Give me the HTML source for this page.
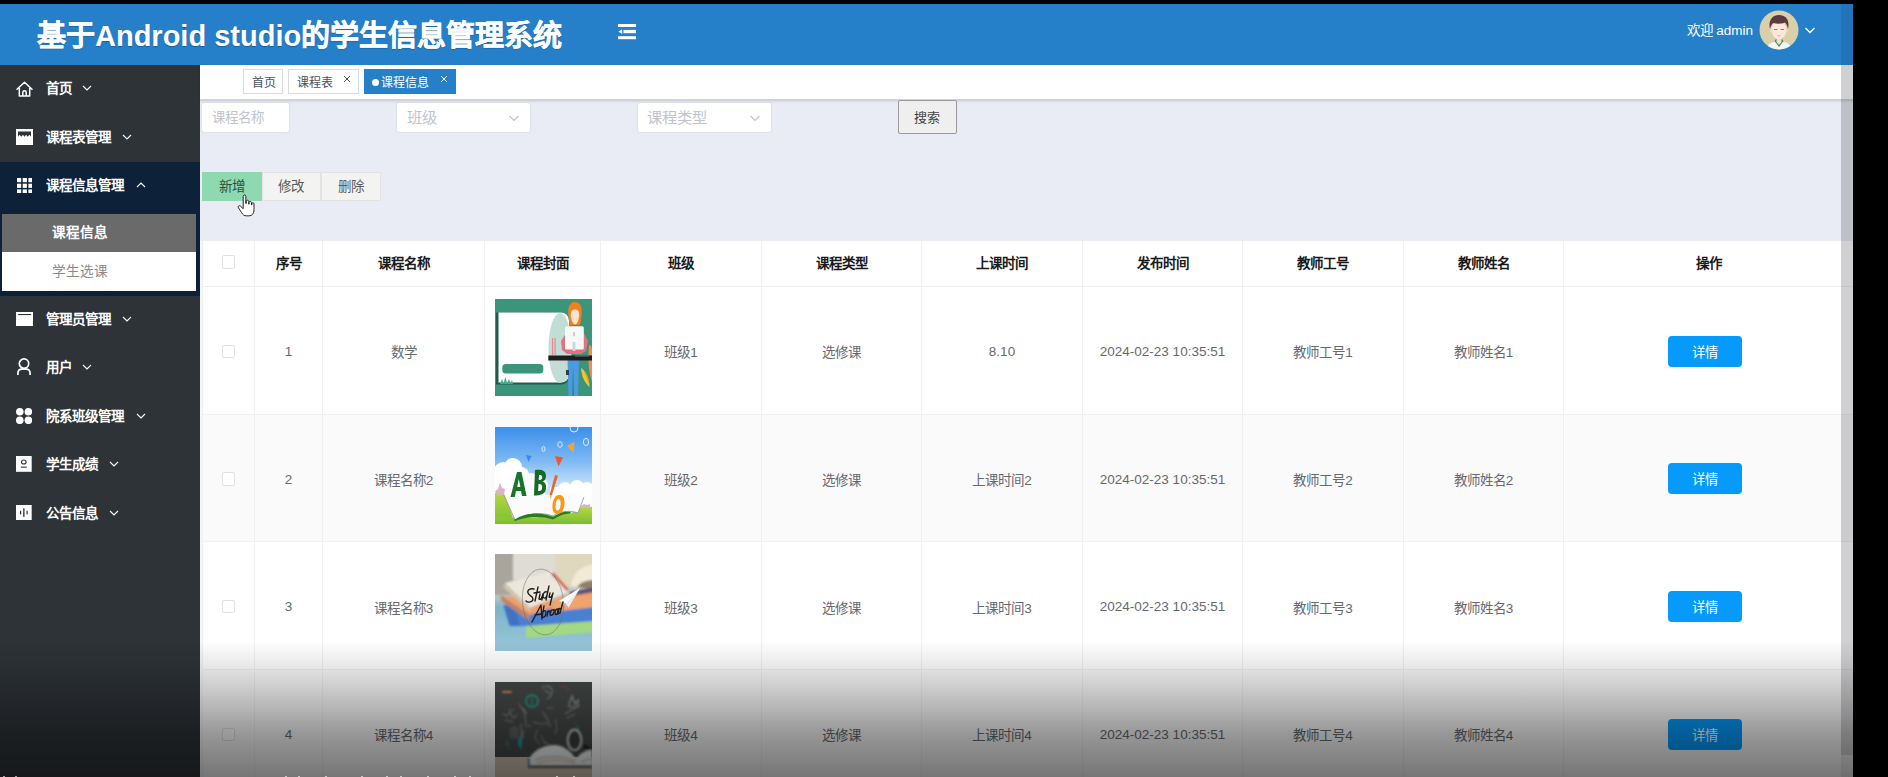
<!DOCTYPE html>
<html lang="zh-CN">
<head>
<meta charset="utf-8">
<title>基于Android studio的学生信息管理系统</title>
<style>
*{box-sizing:border-box;margin:0;padding:0}
html,body{width:1888px;height:777px;overflow:hidden;background:#000}
body{font-family:"Liberation Sans",sans-serif;font-size:14px;color:#606266;position:relative}
.abs{position:absolute}
#app{position:absolute;left:0;top:4px;width:1853px;height:773px;background:#e9ecf4;overflow:hidden}
/* header */
#hdr{position:absolute;left:0;top:0;width:1853px;height:61px;background:#2680c9}
#title{position:absolute;left:37px;top:12.300px;font-size:29px;font-weight:bold;color:#fff;white-space:nowrap;letter-spacing:0px;line-height:40px;text-shadow:0 1px 1px rgba(0,30,80,.35)}
#fold{position:absolute;left:618px;top:19.500px;width:18px;height:16px}
#welcome{position:absolute;left:1686.500px;top:17.500px;font-size:13.500px;color:#fff;line-height:18px;white-space:nowrap}
#avatar{position:absolute;left:1758.600px;top:6.100px;width:40px;height:40px}
#hchev{position:absolute;left:1803.500px;top:20.500px;width:12px;height:10px}
/* sidebar */
#side{position:absolute;left:0;top:61px;width:200px;height:712px;background:#2e3338}
.mi{position:absolute;left:0;width:200px;height:48.500px;color:#fff;font-size:13.500px;font-weight:bold;line-height:48.500px;white-space:nowrap}
.mi .ic{position:absolute}
.mi .tx{position:absolute;left:46px;top:0}
.mi svg.cv{position:absolute;top:19px;width:10px;height:8px}
#openbg{position:absolute;left:0;top:97px;width:200px;height:133.500px;background:#0d2139}
.sub{position:absolute;left:2px;width:194.200px;height:39px;line-height:39px;font-size:13.600px;padding-left:50.400px}
/* main */
#tabs{position:absolute;left:200px;top:60.500px;width:1653px;height:36.500px;background:#fff;border-bottom:2px solid #cfd2d9;box-shadow:0 1px 2px rgba(0,0,0,.08)}
.tab{position:absolute;top:4.500px;height:25px;border:1px solid #d8dce5;background:#fff;color:#495060;font-size:12px;line-height:26px;padding:0 8px;white-space:nowrap}
.tab.on{background:#2680c9;border-color:#2680c9;color:#fff}
.tab .x{position:absolute;top:4.500px;width:8px;height:8px}
.tab .dot{position:absolute;left:7.500px;top:9px;width:7px;height:7px;border-radius:50%;background:#fff}
.inp{position:absolute;top:98.600px;height:29.400px;background:#fff;border-radius:2px;box-shadow:0 0 2px rgba(120,130,160,.35);color:#c0c4cc;line-height:30.500px;white-space:nowrap}
.btn{position:absolute;top:167.700px;height:29.600px;line-height:27px;text-align:center;font-size:13.500px;color:#5a5a5a;background:#f3f3f2;border:1px solid #e3e3e3}
/* table */
#tbl{position:absolute;left:202px;top:237px;width:1651px;height:540px;background:#fff;border-left:1px solid #eff0f3;font-size:13.500px;color:#66696e}
.row{position:absolute;left:0;width:1651px;border-bottom:1px solid #eff0f3}
.row.alt{background:#fafafa}
.c{position:absolute;top:0;height:100%;padding-top:2px;border-right:1px solid #eff0f3;display:flex;align-items:center;justify-content:center;white-space:nowrap}
.hd .c{color:#1a1a1a;font-weight:bold;padding-top:0;padding-bottom:2.500px;font-size:13.500px}
.hd .cb{position:relative;top:-.5px}
.cb{width:13.500px;height:13.500px;border:1px solid #dfe1e6;border-radius:2px;background:#fff}
.det{position:relative;top:-.3px;width:73.600px;height:31px;overflow:hidden;border-radius:4px;background:#059afb;color:#fff;font-size:13.300px;line-height:33px;text-align:center;margin-right:7px}
.img{position:absolute;left:10px;top:11.900px;width:97px;height:97px;display:block}
#sbar{position:absolute;left:1840.500px;top:61px;width:12.500px;height:690px;background:rgba(40,40,50,.22)}
#sbar2{position:absolute;left:1840.500px;top:0;width:12.500px;height:61px;background:rgba(20,40,80,.14)}
#sbar3{position:absolute;left:1840.500px;top:751px;width:12.500px;height:22px;background:rgba(40,40,50,.08)}
#shade{position:absolute;left:0;top:640px;width:1853px;height:137px;background:linear-gradient(to bottom,rgba(0,0,0,0) 0,rgba(0,0,0,.10) 21%,rgba(0,0,0,.24) 44%,rgba(0,0,0,.40) 69%,rgba(0,0,0,.53) 100%);pointer-events:none}
#specks{position:absolute;left:0;top:775.500px;width:1853px;height:2px}
.sp{position:absolute;top:0;width:1.500px;height:2px;background:rgba(255,255,255,.6)}
.cj{-webkit-text-stroke:.45px #fff;display:inline-block;text-align:justify;text-align-last:justify;white-space:nowrap;vertical-align:top}
</style>
</head>
<body>
<div id="app">
  <div id="hdr">
    <div id="title"><span class="cj" style="width:2em">基于</span>Android studio<span class="cj" style="width:9em">的学生信息管理系统</span></div>
    <svg id="fold" viewBox="0 0 18 16"><g fill="#fff"><rect x="0" y="0" width="18" height="3"/><rect x="5.500" y="5.900" width="12.500" height="3.300"/><rect x="0" y="12.200" width="18" height="3"/><path d="M0.300 7.600L4.200 5.200v4.800z"/></g></svg>
    <div id="welcome">欢迎 admin</div>
    <svg id="avatar" viewBox="0 0 40 40"><defs><clipPath id="avc"><circle cx="20" cy="20" r="19.500"/></clipPath></defs><circle cx="20" cy="20" r="19.500" fill="#d9d0ab"/><g clip-path="url(#avc)"><path d="M7 40c1-6 6-8.500 13-8.500s12 2.500 13 8.500z" fill="#f4f6f6"/><path d="M15.500 31l4.500 6 4.500-6-1.500-2h-6z" fill="#3f8f5a"/><path d="M17.500 27h5v5l-2.500 3-2.500-3z" fill="#f6dccd"/><ellipse cx="20" cy="20" rx="7.300" ry="9.300" fill="#fbe8dc"/><ellipse cx="12.600" cy="20.500" rx="1.300" ry="2" fill="#f6dccd"/><ellipse cx="27.400" cy="20.500" rx="1.300" ry="2" fill="#f6dccd"/><path d="M11 19c-2-8 2-14 9-14s11 5 9 14c-0.500-3-1.500-5-3-6.500-3 1.500-8 1.500-12 0.500-1.500 1.500-2.500 3.500-3 6z" fill="#5a3b40"/><path d="M15 19.500h3.500M21.500 19.500h3.500" stroke="#6b4a44" stroke-width="0.700"/><path d="M18.500 25.500c1 0.700 2 0.700 3 0" stroke="#e08a80" stroke-width="0.800" fill="none"/></g></svg>
    <svg id="hchev" viewBox="0 0 12 10"><path d="M1.5 3l4.5 4.5L10.5 3" fill="none" stroke="#fff" stroke-width="1.3"/></svg>
  </div>
  <div id="side">
    <div id="openbg"></div>
    <div class="mi" style="top:0px"><svg class="ic" style="left:16px;top:15.5px;width:17px;height:16px" viewBox="0 0 17 16"><path d="M1 8.200L8.500 1.200 16 8.200M3.300 7v8h10.400V7M6.800 15v-3.600a1.700 1.700 0 0 1 3.400 0V15" fill="none" stroke="#fff" stroke-width="1.500" stroke-linejoin="round" stroke-linecap="round"/></svg><span class="tx">首页</span><svg class="cv" style="left:81.7px" viewBox="0 0 10 8"><path d="M1 2l4 4 4-4" fill="none" stroke="#fff" stroke-width="1.100"/></svg></div>
    <div class="mi" style="top:48.5px"><svg class="ic" style="left:16px;top:15px;width:17px;height:16.5px" viewBox="0 0 17 16.5"><rect x="0" y="0" width="17" height="16.500" fill="#fff"/><path d="M2 2.500H15V7.800L13.400 5.800 11.700 7.800 10.100 5.800 8.500 7.800 6.900 5.800 5.300 7.800 3.600 5.800 2 7.800Z" fill="#2e3338"/></svg><span class="tx">课程表管理</span><svg class="cv" style="left:122.4px" viewBox="0 0 10 8"><path d="M1 2l4 4 4-4" fill="none" stroke="#fff" stroke-width="1.100"/></svg></div>
    <div class="mi" style="top:97px"><svg class="ic" style="left:16.5px;top:15.5px;width:15.6px;height:15.6px" viewBox="0 0 15.6 15.6"><rect x="0" y="0" width="4.200" height="4.200" fill="#fff"/><rect x="5.7" y="0" width="4.200" height="4.200" fill="#fff"/><rect x="11.4" y="0" width="4.200" height="4.200" fill="#fff"/><rect x="0" y="5.7" width="4.200" height="4.200" fill="#fff"/><rect x="5.7" y="5.7" width="4.200" height="4.200" fill="#fff"/><rect x="11.4" y="5.7" width="4.200" height="4.200" fill="#fff"/><rect x="0" y="11.4" width="4.200" height="4.200" fill="#fff"/><rect x="5.7" y="11.4" width="4.200" height="4.200" fill="#fff"/><rect x="11.4" y="11.4" width="4.200" height="4.200" fill="#fff"/></svg><span class="tx">课程信息管理</span><svg class="cv" style="left:135.6px" viewBox="0 0 10 8"><path d="M1 6l4-4 4 4" fill="none" stroke="#fff" stroke-width="1.100"/></svg></div>
    <div class="mi" style="top:230.5px"><svg class="ic" style="left:15.6px;top:16px;width:17.5px;height:14.5px" viewBox="0 0 17.5 14.5"><rect x="0" y="0" width="17.500" height="14.500" fill="#fff"/><rect x="2.200" y="2" width="13" height="1.100" fill="#2e3338"/></svg><span class="tx">管理员管理</span><svg class="cv" style="left:122.4px" viewBox="0 0 10 8"><path d="M1 2l4 4 4-4" fill="none" stroke="#fff" stroke-width="1.100"/></svg></div>
    <div class="mi" style="top:279px"><svg class="ic" style="left:17.3px;top:14.3px;width:14px;height:17px" viewBox="0 0 14 17"><circle cx="7" cy="5.600" r="4.700" fill="none" stroke="#fff" stroke-width="1.700"/><path d="M0.900 17v-1.500c0-2.800 2-4.300 4.100-4.300h4c2.100 0 4.100 1.500 4.100 4.300V17" fill="none" stroke="#fff" stroke-width="1.700"/></svg><span class="tx">用户</span><svg class="cv" style="left:82px" viewBox="0 0 10 8"><path d="M1 2l4 4 4-4" fill="none" stroke="#fff" stroke-width="1.100"/></svg></div>
    <div class="mi" style="top:327.5px"><svg class="ic" style="left:16px;top:15px;width:16.2px;height:16.1px" viewBox="0 0 16.2 16.1"><g fill="#fff"><circle cx="3.800" cy="3.800" r="3.800"/><circle cx="12.400" cy="3.800" r="3.800"/><circle cx="3.800" cy="12.300" r="3.800"/><circle cx="12.400" cy="12.300" r="3.800"/></g></svg><span class="tx">院系班级管理</span><svg class="cv" style="left:135.6px" viewBox="0 0 10 8"><path d="M1 2l4 4 4-4" fill="none" stroke="#fff" stroke-width="1.100"/></svg></div>
    <div class="mi" style="top:376px"><svg class="ic" style="left:16.3px;top:15px;width:15.7px;height:15.8px" viewBox="0 0 15.7 15.8"><rect x="0" y="0" width="15.700" height="15.800" fill="#fff"/><ellipse cx="7.800" cy="6" rx="2.300" ry="2" fill="none" stroke="#2e3338" stroke-width="1.100"/><rect x="4.800" y="10.600" width="6" height="1.100" fill="#2e3338"/></svg><span class="tx">学生成绩</span><svg class="cv" style="left:109.3px" viewBox="0 0 10 8"><path d="M1 2l4 4 4-4" fill="none" stroke="#fff" stroke-width="1.100"/></svg></div>
    <div class="mi" style="top:424.5px"><svg class="ic" style="left:16.3px;top:15.5px;width:15.7px;height:15.2px" viewBox="0 0 15.7 15.2"><rect x="0" y="0" width="15.700" height="15.200" fill="#fff"/><g fill="#2e3338"><rect x="4" y="5.800" width="1.200" height="3.600"/><rect x="7.200" y="3.300" width="1.300" height="8.600"/><rect x="10.500" y="5.800" width="1.200" height="3.600"/></g></svg><span class="tx">公告信息</span><svg class="cv" style="left:109.3px" viewBox="0 0 10 8"><path d="M1 2l4 4 4-4" fill="none" stroke="#fff" stroke-width="1.100"/></svg></div>
    <div class="sub" style="top:148.800px;height:38.300px;line-height:38.500px;background:#6a6a6a;color:#fff;font-weight:bold">课程信息</div>
    <div class="sub" style="top:187.100px;height:38.800px;line-height:39px;background:#fff;color:#8a8a8a">学生选课</div>
  </div>
  <div id="tabs">
    <div class="tab" style="left:43px;width:40px">首页</div>
    <div class="tab" style="left:88px;width:70.500px">课程表<svg class="x" style="left:53.5px" viewBox="0 0 8 8"><path d="M1 1l6 6M7 1l-6 6" stroke="#495060" stroke-width="1" fill="none"/></svg></div>
    <div class="tab on" style="left:163.700px;width:92.700px;padding-left:16px"><i class="dot"></i>课程信息<svg class="x" style="left:75.5px" viewBox="0 0 8 8"><path d="M1 1l6 6M7 1l-6 6" stroke="#fff" stroke-width="1" fill="none"/></svg></div>
  </div>
  <div class="inp" style="left:201.500px;width:87.700px;padding-left:10px;font-size:13.500px">课程名称</div>
  <div class="inp" style="left:397.300px;width:133px;padding-left:9.500px;font-size:15.300px">班级<svg style="position:absolute;right:10px;top:10px;width:12px;height:10px" viewBox="0 0 12 10"><path d="M1.500 3l4.500 4.500L10.500 3" fill="none" stroke="#c0c4cc" stroke-width="1.200"/></svg></div>
  <div class="inp" style="left:637.500px;width:133.500px;padding-left:9.500px;font-size:15.300px">课程类型<svg style="position:absolute;right:10px;top:10px;width:12px;height:10px" viewBox="0 0 12 10"><path d="M1.500 3l4.500 4.500L10.500 3" fill="none" stroke="#c0c4cc" stroke-width="1.200"/></svg></div>
  <div class="abs" style="left:897.500px;top:95.700px;width:59.700px;height:34.600px;background:#efefef;border:1px solid #9a9a9a;border-radius:2px;color:#444;font-size:13px;line-height:33px;text-align:center">搜索</div>
  <div class="btn" style="left:201.500px;width:60px;background:#8ed9b0;border-color:#8ed9b0;color:#2b4f3e">新增</div>
  <div class="btn" style="left:261.700px;width:59px">修改</div>
  <div class="btn" style="left:321.300px;width:59.300px">删除</div>
  <svg class="abs" style="left:237.300px;top:189.500px;width:19px;height:24.700px" viewBox="0 0 20 26"><path d="M6.500 2.500c0-2 2.800-2 2.800 0v7.500l0.400 0.100v-2.300c0-1.700 2.600-1.700 2.600 0v2.800l0.400 0.100v-1.700c0-1.600 2.500-1.600 2.500 0v2.400l0.400 0.100v-1.200c0-1.500 2.300-1.500 2.300 0v6.200c0 4-2 6.500-5.500 6.500h-2.400c-2.500 0-3.800-1.200-5.200-3.400l-3.300-5.200c-0.900-1.500 0.800-2.800 2.100-1.600l2.900 2.700z" fill="#fff" stroke="#222" stroke-width="1.050" stroke-linejoin="round"/></svg>
  <div class="abs" style="left:200px;top:237px;width:3px;height:540px;background:#f5f6f9"></div>
  <div id="tbl">
    <div class="row hd" style="top:0;height:46.200px"><div class="c" style="left:0px;width:52px"><div class="cb"></div></div><div class="c" style="left:52px;width:68px">序号</div><div class="c" style="left:120px;width:162px">课程名称</div><div class="c" style="left:282px;width:116px">课程封面</div><div class="c" style="left:398px;width:161px">班级</div><div class="c" style="left:559px;width:160px">课程类型</div><div class="c" style="left:719px;width:161px">上课时间</div><div class="c" style="left:880px;width:160px">发布时间</div><div class="c" style="left:1040px;width:161px">教师工号</div><div class="c" style="left:1201px;width:160px">教师姓名</div><div class="c" style="left:1361px;width:289px;border-right:0">操作</div></div>
    <div class="row" style="top:46.200px;height:127.600px"><div class="c" style="left:0px;width:52px"><div class="cb"></div></div><div class="c" style="left:52px;width:68px">1</div><div class="c" style="left:120px;width:162px">数学</div><div class="c" style="left:282px;width:116px"><svg class="img" viewBox="0 0 97 97"><rect width="97" height="97" fill="#3a957a"/>
<path d="M1 13.500h65a8 8 0 0 1 8 8v56a8 8 0 0 1-8 8H1z" fill="#1f5c4b"/>
<path d="M3.500 13.500h62.500a8 8 0 0 1 8 8v54a8 8 0 0 1-8 8H3.500z" fill="#fff"/>
<ellipse cx="65" cy="49" rx="11.500" ry="35" fill="#c2ddd5"/>
<path d="M74 25v50a8 8 0 0 1-8 8h-2c8-10 12-22 12-34s-1-18-2-24z" fill="#c2ddd5"/>
<rect x="7.300" y="65" width="41" height="9.500" rx="3.500" fill="#3a957a"/>
<path d="M5 85l2-5 1.500 4 2-6 1.500 6 2-4 1.500 4 1.500-3 1 4z" fill="#3fae8c"/>
<rect x="57" y="39" width="1.200" height="17" fill="#e58a92"/><rect x="59.500" y="39" width="1.200" height="17" fill="#e58a92"/>
<path d="M73.300 12c0-6 3-9 6.700-9s6.700 3 6.700 9c0 5-0.700 10-1.700 14h-10c-1-4-1.700-9-1.700-14z" fill="#f0821e"/>
<path d="M75.800 15c0-3 1.800-4.500 4.200-4.500s4.200 1.500 4.200 4.500c0 5-2 10.500-4.200 10.500s-4.200-5.500-4.200-10.500z" fill="#fbe3d0"/>
<path d="M66 42l5-8h18l4 8-2 10-5 3h-14l-5-4z" fill="#e4717f"/>
<rect x="70" y="27.300" width="18.800" height="23.200" rx="1.500" fill="#f7f8f8"/>
<rect x="78" y="33" width="2" height="4.500" rx="1" fill="#c9cfd0"/><rect x="77.600" y="43" width="2.800" height="9" fill="#d0d5d6"/>
<path d="M72.500 61h11.500l-1 36h-4l-1-26-1 26h-3.500z" fill="#4b9be0"/>
<path d="M78 64l0.800 33h-1.200z" fill="#2f78c4"/>
<path d="M94.500 46c1.500 0 2.500 2 2.500 5v32c-2-6-3.500-14-3.500-22s0-15 1-15z" fill="#ef8a52"/>
<rect x="53.300" y="56.500" width="43.700" height="5" fill="#1e1e1e"/><rect x="80" y="56.500" width="14" height="1" fill="#777"/>
<rect x="71" y="71" width="3" height="5" fill="#2b3d4a"/>
<path d="M86 69c4 2 8 9 8.500 19-4-3-8-10-8.500-19z" fill="#f2c531"/><path d="M89 72c3 2 5 8 5.500 14z" fill="#d9a514"/>
</svg></div><div class="c" style="left:398px;width:161px">班级1</div><div class="c" style="left:559px;width:160px">选修课</div><div class="c" style="left:719px;width:161px">8.10</div><div class="c" style="left:880px;width:160px">2024-02-23 10:35:51</div><div class="c" style="left:1040px;width:161px">教师工号1</div><div class="c" style="left:1201px;width:160px">教师姓名1</div><div class="c" style="left:1361px;width:289px;border-right:0"><div class="det">详情</div></div></div>
    <div class="row alt" style="top:173.800px;height:127.600px"><div class="c" style="left:0px;width:52px"><div class="cb"></div></div><div class="c" style="left:52px;width:68px">2</div><div class="c" style="left:120px;width:162px">课程名称2</div><div class="c" style="left:282px;width:116px"><svg class="img" viewBox="0 0 97 97"><defs><linearGradient id="sky" x1="0" y1="0" x2="0" y2="1"><stop offset="0" stop-color="#3c8fea"/><stop offset="0.350" stop-color="#7db9f4"/><stop offset="0.600" stop-color="#c4e0fa"/><stop offset="1" stop-color="#e8f3fc"/></linearGradient><linearGradient id="grs" x1="0" y1="0" x2="0" y2="1"><stop offset="0" stop-color="#b4d843"/><stop offset="1" stop-color="#7cbf2f"/></linearGradient></defs>
<rect width="97" height="97" fill="url(#sky)"/>
<g fill="#fff"><circle cx="8" cy="44" r="9"/><circle cx="18" cy="40" r="9"/><circle cx="26" cy="48" r="8"/><circle cx="36" cy="54" r="8"/><circle cx="4" cy="56" r="10"/><circle cx="46" cy="58" r="7"/><rect x="0" y="47" width="50" height="33"/>
<circle cx="70" cy="62" r="7"/><circle cx="82" cy="60" r="7"/><circle cx="92" cy="62" r="7"/><rect x="55" y="60" width="42" height="25"/></g>
<path d="M0 66c4-3 8-2 10 2l10 29H0z" fill="url(#grs)"/><path d="M0 97h97V80c-6-2-14 0-20 6-20 4-50 6-77 4z" fill="url(#grs)"/>
<path d="M0 64l3-2 2-6 2 5 3 1-1 6-6 1z" fill="#d9b3c6"/><path d="M86 79l3-2 3 1 3-1v4h-9z" fill="#d9b3c6"/>
<path d="M9 68c10-4 28-5 44 0 10-4 25-4 36 2l-6 16c-8-3-18-2-25 3-10-4-25-3-38 4z" fill="#fbfbfb"/>
<path d="M9 68l11 25c12-7 28-8 38-4 7-5 17-6 25-3l6-16" fill="none" stroke="#8c8c8c" stroke-width="0.800"/>
<path d="M19 93c12-8 28-8 39-3 7-5 12-6 18-5l-1 1.500c-5 0-11 2-17 6-12-4-26-3-38 1.500z" fill="#2c7a1f"/>
<path d="M22 45h4.500l5 24h-4.500l-1-5h-5l-1.200 6h-4.300zM23.800 52l-1.600 8h3.200z" fill="#17752a" fill-rule="evenodd"/>
<path d="M40 43c6-1 11 0 11 6 0 3-1.500 5-3.500 5.500 2.500 0.500 4 3 3.500 7-0.500 6-6 7-12 7zM44 48l-0.300 5c2 0 3.500-0.500 3.500-2.800s-1.300-2.300-3.200-2.200zM43.500 57l-0.400 7c2.500 0 4-0.500 4-3.800 0-3-1.500-3.200-3.600-3.200z" fill="#136b25" fill-rule="evenodd"/>
<path d="M60 48l3 0.800-6 19-1.700 4.500-0.500-5z" fill="#e9662b"/><path d="M55.300 68l1.800 0.600-1.800 3.800z" fill="#f3d5a6"/>
<path d="M64 68c4 0 6 3 5.500 9s-3 10-7 10-5.500-4-5-9 2.500-10 6.500-10zM63.500 72c-1.500 0-2.500 2-2.800 6s0.500 5.500 2 5.500 2.600-2 2.900-6-0.600-5.500-2.100-5.500z" fill="#f39a1c" fill-rule="evenodd"/>
<path d="M31 28l5.500 1-3 6z" fill="#3a86f0"/><path d="M60 29l8 1.500-4.500 9z" fill="#f0582c"/><path d="M72 19l7.500-4-1 11z" fill="#f6a42c"/>
<g fill="none" stroke="#d6ebfc" stroke-width="1"><ellipse cx="48.500" cy="22" rx="1.500" ry="2.600"/><ellipse cx="65" cy="17.500" rx="2.200" ry="2.800"/><ellipse cx="91" cy="15" rx="2.600" ry="3.600"/><ellipse cx="79" cy="1" rx="4" ry="4"/></g>
</svg></div><div class="c" style="left:398px;width:161px">班级2</div><div class="c" style="left:559px;width:160px">选修课</div><div class="c" style="left:719px;width:161px">上课时间2</div><div class="c" style="left:880px;width:160px">2024-02-23 10:35:51</div><div class="c" style="left:1040px;width:161px">教师工号2</div><div class="c" style="left:1201px;width:160px">教师姓名2</div><div class="c" style="left:1361px;width:289px;border-right:0"><div class="det">详情</div></div></div>
    <div class="row" style="top:301.400px;height:127.600px"><div class="c" style="left:0px;width:52px"><div class="cb"></div></div><div class="c" style="left:52px;width:68px">3</div><div class="c" style="left:120px;width:162px">课程名称3</div><div class="c" style="left:282px;width:116px"><svg class="img" viewBox="0 0 97 97"><defs><linearGradient id="bg3" x1="0" y1="0" x2="0" y2="1"><stop offset="0" stop-color="#d8d4ca"/><stop offset="0.400" stop-color="#c4ccc8"/><stop offset="0.550" stop-color="#7db4cc"/><stop offset="1" stop-color="#98c6d8"/></linearGradient><filter id="bl3" x="-10%" y="-10%" width="120%" height="120%"><feGaussianBlur stdDeviation="1"/></filter><clipPath id="cp3"><rect width="97" height="97"/></clipPath></defs>
<rect width="97" height="97" fill="url(#bg3)"/>
<g clip-path="url(#cp3)"><g filter="url(#bl3)">
<rect x="-3" y="-3" width="21" height="44" fill="#aaa59c"/><rect x="18" y="-3" width="42" height="28" fill="#dedcd5"/><rect x="60" y="-3" width="40" height="36" fill="#e0d7bf"/>
<path d="M76 32c2-14 10-20 24-22v26z" fill="#f2ead4"/><path d="M82 33c4-5 9-7 18-7v10z" fill="#8f8068"/>
<path d="M31 72l69-5.200v11.400L31 84z" fill="#a2d982"/>
<path d="M8.500 51l91.500-1v17L31 72H14.700z" fill="#4a80d2"/><path d="M8.500 51l6.200 21h10l-4-16z" fill="#3f72c4"/>
<path d="M60 44l40-6.500v15.500L56 58z" fill="#f0a36a"/><path d="M74 38l26-5v5l-24 4z" fill="#5d4f7c"/>
<path d="M6 42l28.700 19 25-8-3-7z" fill="#eea06c"/><path d="M5.400 41l1.500 6.500 27.800 19.500v-6z" fill="#c2826a"/>
<path d="M10 29l45-11.200 18.600 20-38.600 16z" fill="#ebe7db"/><path d="M10 29l25 24.800 0.300 4-27-24.500z" fill="#cfc4b0"/>
<path d="M56 20l3-1.500 15 17-2.500 1.500z" fill="#d2604e"/>
</g></g>
<ellipse cx="48" cy="48" rx="20.500" ry="33" fill="none" stroke="#6d6a66" stroke-width="0.500" transform="rotate(-6 48 48)"/>
<path d="M64 47l21-13-11.500 19.500-2.500-4z" fill="#fff"/><path d="M64 47l7 2.500 2.500 4-4.500-2.500z" fill="#b9c3c9"/><path d="M71 49.500l14-15.500-11.500 19.500z" fill="#e6ecef"/>
<g fill="none" stroke="#1c1c1c" stroke-width="1.350" stroke-linecap="round" stroke-linejoin="round">
<path d="M39 35c-4-1-7 1-6 4s5 3 5 6-5 4-7 2"/><path d="M43 33l-3 14M39 39l6-1"/><path d="M45 40l-1 5c1 1 3 0 4-5l-1 6"/><path d="M52 38c-2-1-4 1-4 4s3 3 4-1l2-9-3 14"/><path d="M55 39l-1 4c1 1 3 0 4-4l-3 12"/>
<path d="M37 68l9-17 1 14M40 61l7-1"/><path d="M49 52l-2 11c2 1 4-1 4-4s-2-3-3-1"/><path d="M53 57l-1 5M53 58c1-1 2-1 3 0"/><path d="M58 56c-2 0-3 2-3 4s3 2 4-2-1-2-1-2"/><path d="M63 55c-2 0-3 2-3 4s2 2 3 0l1-4-1 5"/><path d="M68 48l-3 11c-2 1-3-1-2-3s2-2 3-1"/>
</g>
</svg></div><div class="c" style="left:398px;width:161px">班级3</div><div class="c" style="left:559px;width:160px">选修课</div><div class="c" style="left:719px;width:161px">上课时间3</div><div class="c" style="left:880px;width:160px">2024-02-23 10:35:51</div><div class="c" style="left:1040px;width:161px">教师工号3</div><div class="c" style="left:1201px;width:160px">教师姓名3</div><div class="c" style="left:1361px;width:289px;border-right:0"><div class="det">详情</div></div></div>
    <div class="row alt" style="top:429.000px;height:127.600px"><div class="c" style="left:0px;width:52px"><div class="cb"></div></div><div class="c" style="left:52px;width:68px">4</div><div class="c" style="left:120px;width:162px">课程名称4</div><div class="c" style="left:282px;width:116px"><svg class="img" viewBox="0 0 97 97"><defs><filter id="bl4"><feGaussianBlur stdDeviation="0.900"/></filter></defs>
<rect width="97" height="97" fill="#444847"/>
<rect x="0" y="75" width="97" height="22" fill="#cdbfae"/>
<g filter="url(#bl4)" fill="none" stroke="#7f8482" stroke-width="1.100" stroke-linecap="round">
<path d="M8 10h8" stroke="#e08a52" stroke-width="1.800"/>
<circle cx="37" cy="19" r="6" stroke="#23a58c" stroke-width="1.600"/><path d="M37 15v8" stroke="#23a58c"/>
<path d="M47 6c4-3 9-2 10 2s-2 8-5 9M50 8l5 4"/><path d="M66 5c3-2 7-1 7 3" stroke="#8a4a3a"/>
<path d="M74 22l3-8 3 8 3-4v7h-9z" stroke="#9a9e9c"/><path d="M70 32l10-6M72 36l8-4"/>
<path d="M8 32l4 2 3-4 3 6 4-3M14 28h5M10 38l8 2"/><path d="M24 22l5 8 2 12M28 26l4 6"/>
<path d="M16 46v10M19 44v12M22 46v10M26 42v14M30 44h6M28 48v8"/>
<path d="M38 40l8 2 6-1 4 3M48 30l6 10M52 26h6" /><path d="M60 38c2 4 2 10 0 14M42 48l-2 8 4 6M46 54l4 8M50 60l6 4"/>
<path d="M26 54c-3 3-3 9 0 12z" fill="#1c9fc0" stroke="#1c9fc0"/><path d="M42 68l6 2" stroke="#a4623c"/><path d="M12 58l2 10M10 62h4" stroke="#4b6f66"/><path d="M80 40l4 10M84 44l-2 12" stroke="#3d6b66"/>
</g>
<g filter="url(#bl4)">
<ellipse cx="79.500" cy="58" rx="7" ry="10.500" fill="#3a3b3b" stroke="#d9dad8" stroke-width="1.600"/>
<path d="M88 62l9 4v4l-9-4z" fill="#1d1d1f"/>
<path d="M34 77c5-9 13-13 25-14 8 0 16 5 22 14v8H33v-6z" fill="#eceef0"/><path d="M81 77c4-6 10-9 16-9v17H81z" fill="#eceef0"/>
<path d="M40 78c10-4 26-5 40 1M42 81c10-3 24-4 38 0M86 80c4-2 7-3 11-3" fill="none" stroke="#c8bfa6" stroke-width="1.400"/>
<path d="M33 83h64v3H33z" fill="#5b5f66"/><path d="M33 76l2 0v9h-2z" fill="#3e6e8a"/>
</g>
</svg></div><div class="c" style="left:398px;width:161px">班级4</div><div class="c" style="left:559px;width:160px">选修课</div><div class="c" style="left:719px;width:161px">上课时间4</div><div class="c" style="left:880px;width:160px">2024-02-23 10:35:51</div><div class="c" style="left:1040px;width:161px">教师工号4</div><div class="c" style="left:1201px;width:160px">教师姓名4</div><div class="c" style="left:1361px;width:289px;border-right:0"><div class="det">详情</div></div></div>
  </div>
  <div id="sbar"></div><div id="sbar2"></div><div id="sbar3"></div>
</div>
<div id="shade"></div>
<div id="specks"><i class="sp" style="left:3px"></i><i class="sp" style="left:15px"></i><i class="sp" style="left:285px"></i><i class="sp" style="left:298px"></i><i class="sp" style="left:325px"></i><i class="sp" style="left:361px"></i><i class="sp" style="left:386px"></i><i class="sp" style="left:400px"></i><i class="sp" style="left:427px"></i><i class="sp" style="left:454px"></i><i class="sp" style="left:469px"></i><i class="sp" style="left:556px"></i><i class="sp" style="left:573px"></i></div>
</body>
</html>
